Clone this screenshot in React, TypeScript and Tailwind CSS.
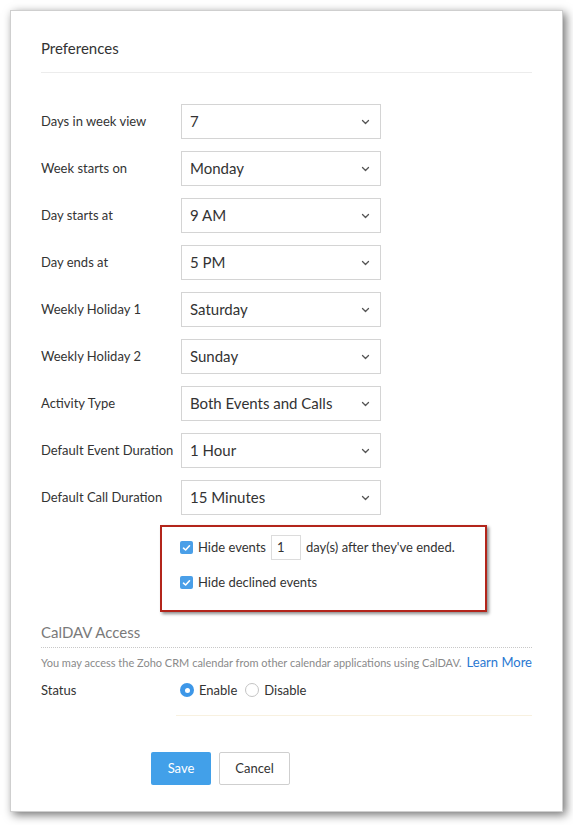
import React from 'react';

const FONT = { fontFamily: 'Lato, "Open Sans", "Liberation Sans", sans-serif' };

const ROWS: [string, string][] = [
  ['Days in week view', '7'],
  ['Week starts on', 'Monday'],
  ['Day starts at', '9 AM'],
  ['Day ends at', '5 PM'],
  ['Weekly Holiday 1', 'Saturday'],
  ['Weekly Holiday 2', 'Sunday'],
  ['Activity Type', 'Both Events and Calls'],
  ['Default Event Duration', '1 Hour'],
  ['Default Call Duration', '15 Minutes'],
];

function Chevron() {
  return (
    <svg width="9" height="6" viewBox="0 0 9 6" className="shrink-0">
      <path d="M1.5 1.5 L4.5 4.5 L7.5 1.5" fill="none" stroke="#555" strokeWidth="1.3" strokeLinecap="round" strokeLinejoin="round" />
    </svg>
  );
}

function Checkbox() {
  return (
    <span className="flex h-[13px] w-[13px] shrink-0 items-center justify-center rounded-[2px] bg-[#4a9fe8]">
      <svg width="9" height="8" viewBox="0 0 9 8">
        <path d="M1.5 4.2 L3.6 6 L7.5 1.8" fill="none" stroke="#fff" strokeWidth="1.6" strokeLinecap="round" strokeLinejoin="round" />
      </svg>
    </span>
  );
}

export default function App() {
  return (
    <div className="min-h-[825px] bg-white p-[10px]" style={FONT}>
      <div className="h-[802px] w-[553px] border border-[#cfcfcf] bg-white px-[30px] pt-[27px] shadow-[3px_3px_9px_rgba(0,0,0,0.55)]">
        <h1 className="text-[15px] leading-[20px] text-[#333]">Preferences</h1>
        <div className="mt-[14px] h-px bg-[#ececec]" />

        <div className="mt-[31px] flex flex-col gap-[12px]">
          {ROWS.map(([label, value]) => (
            <div key={label} className="flex items-center">
              <span className="w-[140px] text-[13px] text-[#333]">{label}</span>
              <div className="flex h-[35px] w-[200px] items-center justify-between border border-[#d4d4d4] pl-[8px] pr-[10px]">
                <span className="text-[15px] text-[#333]">{value}</span>
                <Chevron />
              </div>
            </div>
          ))}
        </div>

        <div className="ml-[119px] mt-[10px] h-[87px] w-[327px] border-2 border-[#b3251b] pl-[18px] pt-[8px] shadow-[2px_2px_3px_rgba(0,0,0,0.45)]">
          <div className="flex items-center text-[13px] text-[#333]">
            <Checkbox />
            <span className="ml-[5px]">Hide events</span>
            <span className="ml-[5px] flex h-[25px] w-[30px] items-center border border-[#dcdcdc] pl-[5px] text-[13px]">1</span>
            <span className="ml-[5px]">day(s) after they've ended.</span>
          </div>
          <div className="mt-[13px] flex items-center text-[13px] text-[#333]">
            <Checkbox />
            <span className="ml-[5px]">Hide declined events</span>
          </div>
        </div>

        <h2 className="mt-[10px] text-[15px] leading-[20px] text-[#7a7a7a]">CalDAV Access</h2>
        <div className="mt-[5px] border-t border-dotted border-[#c8c8c8]" />
        <div className="mt-[5px] flex items-center justify-between">
          <span className="text-[11px] text-[#8a8a8a]">You may access the Zoho CRM calendar from other calendar applications using CalDAV.</span>
          <span className="text-[13px] text-[#2a78d2]">Learn More</span>
        </div>

        <div className="mt-[8px] flex items-center text-[13px] text-[#333]">
          <span className="w-[139px]">Status</span>
          <span className="flex h-[14px] w-[14px] items-center justify-center rounded-full bg-[#3d97e8]">
            <span className="h-[5px] w-[5px] rounded-full bg-white" />
          </span>
          <span className="ml-[5px]">Enable</span>
          <span className="ml-[8px] h-[14px] w-[14px] rounded-full border border-[#c4c4c4]" />
          <span className="ml-[5px]">Disable</span>
        </div>
        <div className="ml-[135px] mt-[15px] h-px bg-[#f8f1e0]" />

        <div className="ml-[110px] mt-[36px] flex gap-[8px]">
          <button className="h-[33px] w-[60px] rounded-[2px] bg-[#42a0e9] text-[13px] text-white">Save</button>
          <button className="h-[33px] w-[71px] rounded-[2px] border border-[#cfcfcf] bg-white text-[13px] text-[#333]">Cancel</button>
        </div>
      </div>
    </div>
  );
}
